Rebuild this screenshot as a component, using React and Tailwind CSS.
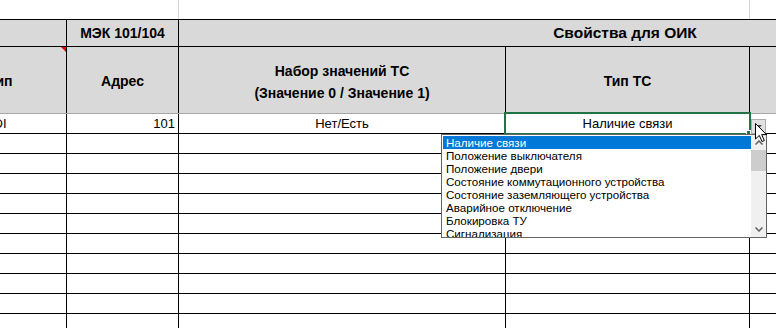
import React from 'react';

const cols = 'grid grid-cols-[67px_112px_327px_244px_1fr]';

const options = [
  'Наличие связи',
  'Положение выключателя',
  'Положение двери',
  'Состояние коммутационного устройства',
  'Состояние заземляющего устройства',
  'Аварийное отключение',
  'Блокировка ТУ',
  'Сигнализация',
];

function BlankRow() {
  return (
    <div className={`${cols} h-[20px] border-b border-black`}>
      <div className="border-r border-black" />
      <div className="border-r border-black" />
      <div className="border-r border-black" />
      <div className="border-r border-black" />
      <div />
    </div>
  );
}

function Dropdown() {
  return (
    <div className="absolute left-[441px] top-[134px] w-[326px] h-[104px] border border-[#646464] bg-white flex">
      <div className="flex-1 overflow-hidden pl-px pt-px font-['Liberation_Sans',sans-serif] text-[11.6px] text-black">
        {options.map((o, i) => (
          <div
            key={o}
            className={`h-[13px] leading-[13px] pl-[3px] whitespace-nowrap ${i === 0 ? 'bg-[#0078d7] text-white' : ''}`}
          >
            {o}
          </div>
        ))}
      </div>
      <div className="w-[15px] bg-[#f0f0f0] flex flex-col">
        <div className="h-[15px] flex items-center justify-center">
          <svg width="8" height="5" viewBox="0 0 8 5">
            <path d="M0.5 4.5 L4 1 L7.5 4.5" fill="none" stroke="#606060" strokeWidth="1.5" />
          </svg>
        </div>
        <div className="h-[21px] bg-[#cdcdcd]" />
        <div className="flex-1" />
        <div className="h-[15px] flex items-center justify-center">
          <svg width="8" height="5" viewBox="0 0 8 5">
            <path d="M0.5 0.5 L4 4 L7.5 0.5" fill="none" stroke="#606060" strokeWidth="1.5" />
          </svg>
        </div>
      </div>
    </div>
  );
}

export default function App() {
  return (
    <div className="relative w-[776px] h-[328px] overflow-hidden bg-white font-['Liberation_Sans',sans-serif] text-black">
      {/* area above the table */}
      <div className="flex h-[19px]">
        <div className="w-[179px] border-r border-[#d4d4d4]" />
        <div className="w-[571px] border-r border-[#d4d4d4]" />
      </div>

      {/* header row 1 */}
      <div className={`${cols} h-[28px] bg-[#d9d9d9] border-y border-black font-bold`}>
        <div className="border-r border-black" />
        <div className="border-r border-black flex items-center justify-center text-[14px]">МЭК 101/104</div>
        <div className="col-span-3 overflow-hidden flex items-center">
          <div className="w-[892px] shrink-0 text-center text-[15.5px]">Свойства для ОИК</div>
        </div>
      </div>

      {/* header row 2 */}
      <div className={`${cols} h-[67px] bg-[#d9d9d9] border-b border-[#a6a6a6] font-bold text-[14px]`}>
        <div className="relative border-r border-black overflow-hidden flex items-center pt-[3px]">
          <div className="w-[134px] -ml-[67px] shrink-0 text-center">Тип</div>
          <div className="absolute top-0 right-0 w-0 h-0 border-l-[5px] border-l-transparent border-t-[5px] border-t-[#e00000]" />
        </div>
        <div className="border-r border-black flex items-center justify-center pt-[3px]">Адрес</div>
        <div className="border-r border-black flex flex-col items-center justify-center pt-[3px] leading-[22px]">
          <div>Набор значений ТС</div>
          <div>(Значение 0 / Значение 1)</div>
        </div>
        <div className="border-r border-black flex items-center justify-center pt-[3px]">Тип ТС</div>
        <div />
      </div>

      {/* data row */}
      <div className={`${cols} h-[20px] border-b border-black text-[13px] leading-[19px]`}>
        <div className="border-r border-black overflow-hidden">
          <div className="w-[134px] -ml-[67px] text-center">DI</div>
        </div>
        <div className="border-r border-black text-right pr-[3px]">101</div>
        <div className="border-r border-black text-center">Нет/Есть</div>
        <div className="border-r border-black text-center">Наличие связи</div>
        <div />
      </div>

      {Array.from({ length: 10 }).map((_, i) => (
        <BlankRow key={i} />
      ))}

      {/* selection frame */}
      <div className="absolute left-[504px] top-[112px] w-[247px] h-[23px] border-2 border-[#217346]" />
      <div className="absolute left-[746px] top-[130px] w-[5px] h-[5px] bg-[#217346] border border-white" />

      {/* in-cell dropdown button */}
      <div className="absolute left-[751px] top-[119px] w-[15px] h-[15px] bg-[#e1e1e1] border border-[#adadad] flex items-center justify-center">
        <svg width="7" height="4" viewBox="0 0 7 4">
          <path d="M0 0 H7 L3.5 4 Z" fill="#505050" />
        </svg>
      </div>

      <Dropdown />

      {/* mouse pointer */}
      <svg className="absolute left-[755px] top-[123px]" width="13" height="20" viewBox="0 0 13 20">
        <path d="M0.5 0.5 L0.5 16 L4.3 12.4 L7 18.5 L9.3 17.5 L6.7 11.6 L11.5 11.6 Z" fill="#ffffff" stroke="#000000" strokeWidth="1" strokeLinejoin="round" />
      </svg>
    </div>
  );
}
